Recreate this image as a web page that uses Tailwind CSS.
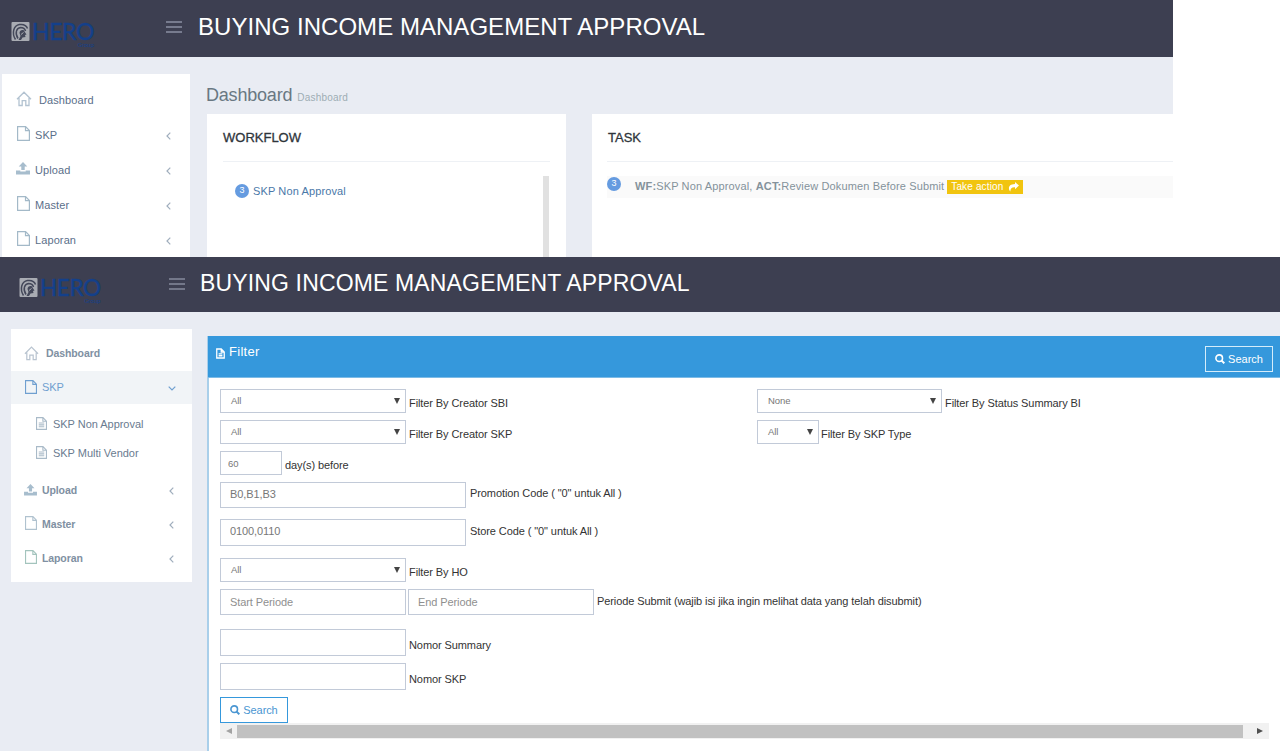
<!DOCTYPE html>
<html lang="en">
<head>
    <meta charset="UTF-8">
    <meta name="viewport" content="width=device-width, initial-scale=1.0">
    <title>Buying Income Management Approval</title>
    <script src="https://cdn.jsdelivr.net/npm/@tailwindcss/browser@4"></script>
</head>
<body class="bg-white w-[1280px] h-[751px] overflow-hidden font-['Liberation_Sans',Arial,sans-serif] text-[11px] leading-4">

    <!-- Icons -->
    <svg class="hidden">
        <symbol id="home" viewBox="0 0 16 16" fill="none" stroke="currentColor" stroke-width="1.300">
            <path d="M1 8.300 8 1.200l7 7.100M3 7v7.500h3.200V9.700h3.600v4.800H13V7" />
        </symbol>
        <symbol id="file" viewBox="0 0 13 15" fill="none" stroke="currentColor" stroke-width="1.200">
            <path d="M.6.6h8l3.800 3.900v9.900H.6zM8.500.6v4h4" />
        </symbol>
        <symbol id="doc" viewBox="0 0 12 14" fill="none" stroke="currentColor" stroke-width="1.200">
            <path d="M.6.6h7l3.800 3.900v8.900H.6zM7.500.6v4h4M3 6.500h6M3 8.500h6M3 10.500h6" />
        </symbol>
        <symbol id="upload" viewBox="0 0 14 13" fill="currentColor">
            <path d="M7 0l4.300 4.500H8.700V8H5.300V4.500H2.700zM0 8.500h4.300V9.500h5.400V8.500H14V12.500H0z" />
        </symbol>
        <symbol id="left" viewBox="0 0 5 8" fill="none" stroke="currentColor" stroke-width="1.200">
            <path d="M4.300.7 1 4l3.300 3.300" />
        </symbol>
        <symbol id="down" viewBox="0 0 8 5" fill="none" stroke="currentColor" stroke-width="1.200">
            <path d="M.7.7 4 4 7.300.7" />
        </symbol>
        <symbol id="search" viewBox="0 0 10 10" fill="none" stroke="currentColor">
            <circle cx="4.200" cy="4.200" r="3.300" stroke-width="1.600" />
            <path d="M6.600 6.600 9.300 9.300" stroke-width="2" />
        </symbol>
        <symbol id="share" viewBox="0 0 11 10" fill="currentColor">
            <path d="M7 0l4 3.600L7 7.200V5.200C4 5 2.500 6 2.300 9.500 0 7 0 2.200 7 2z" />
        </symbol>
        <symbol id="caret" viewBox="0 0 6 6" fill="currentColor">
            <path d="M0 0h6L3 6z" />
        </symbol>
        <symbol id="menu" viewBox="0 0 16 12" fill="none" stroke="currentColor" stroke-width="1.400">
            <path d="M0 1h16M0 6h16M0 11h16" />
        </symbol>
        <symbol id="emblem" viewBox="0 0 18 19" fill="none">
            <rect width="18" height="19" rx="1" fill="#a9acb3" />
            <path d="M4 17.500C0 11 2 3.500 8 2.500c4-.5 7 1 8 4M6.500 16.500C3 11 5 6 9 5.500c3 0 4.500 1.500 5 3.500" stroke="#44485a" stroke-width="1.500" />
            <path d="M8 11c0-2.500 2-3.500 4-3l3 4.500-1.500.5.500 2-3 .5-1.500 2.500H7l2-4z" fill="#44485a" />
            <path d="M9.500 12.500l2.500-2" stroke="#a9acb3" />
        </symbol>
    </svg>

    <!-- Dashboard page -->
    <section class="w-[1173px] h-[257px] overflow-hidden bg-[#e9ecf3]">
        <header class="h-[57px] bg-[#3d3f51] flex items-start">
            <div class="w-[166px] pl-[11px] pt-[22px] flex shrink-0">
                <svg class="w-[19px] h-[19px]"><use href="#emblem" /></svg>
                <div class="flex flex-col text-[#14408a] font-['Lato',sans-serif] pl-[2px]">
                    <span class="text-[23px] leading-[19px] tracking-[-0.4px] font-medium [-webkit-text-stroke:0.3px]">HERO</span>
                    <span class="self-end text-[6px] leading-[8px]">Group</span>
                </div>
            </div>
            <svg class="w-4 h-3 mt-[21px] text-[#8b90a2] shrink-0"><use href="#menu" /></svg>
            <h1 class="ml-4 mt-[11px] text-[24px] leading-[32px] tracking-[0.040px] text-white whitespace-nowrap">BUYING INCOME MANAGEMENT APPROVAL</h1>
        </header>

        <div class="flex">
            <nav class="ml-[2px] mt-[17px] w-[188px] h-[183px] bg-white pt-2 shrink-0 tracking-[0.1px] text-[#5b6f8a]">
                <a class="flex items-center h-[35px] pl-[14px] gap-[7px]"><svg class="size-4 mb-[2px] text-[#b3c3d1]"><use href="#home" /></svg>Dashboard</a>
                <a class="flex items-center h-[35px] pl-[15px] pr-[19px]"><svg class="w-[13px] h-[15px] mr-[5px] mb-[2px] text-[#a3b9c8]"><use href="#file" /></svg>SKP<svg class="w-[5px] h-2 ml-auto mt-[3px] text-[#a0aebd]"><use href="#left" /></svg></a>
                <a class="flex items-center h-[35px] pl-[14px] pr-[19px]"><svg class="w-[14px] h-[13px] mr-[5px] mb-[2px] text-[#a7bdcd]"><use href="#upload" /></svg>Upload<svg class="w-[5px] h-2 ml-auto mt-[3px] text-[#a0aebd]"><use href="#left" /></svg></a>
                <a class="flex items-center h-[35px] pl-[15px] pr-[19px]"><svg class="w-[13px] h-[15px] mr-[5px] mb-[2px] text-[#a3b9c8]"><use href="#file" /></svg>Master<svg class="w-[5px] h-2 ml-auto mt-[3px] text-[#a0aebd]"><use href="#left" /></svg></a>
                <a class="flex items-center h-[35px] pl-[15px] pr-[19px]"><svg class="w-[13px] h-[15px] mr-[5px] mb-[2px] text-[#a3b9c8]"><use href="#file" /></svg>Laporan<svg class="w-[5px] h-2 ml-auto mt-[3px] text-[#a0aebd]"><use href="#left" /></svg></a>
            </nav>

            <main class="ml-[17px] flex-1 min-w-0">
                <div class="h-[57px] pt-[26px] flex items-baseline gap-[5px] -ml-px">
                    <h2 class="text-[18px] leading-6 tracking-[-0.2px] text-[#697882]">Dashboard</h2>
                    <small class="text-[10px] tracking-[0.2px] text-[#9eacb4]">Dashboard</small>
                </div>
                <div class="flex gap-[26px]">
                    <div class="w-[359px] h-[143px] bg-white px-4 shrink-0">
                        <h3 class="h-[48px] pt-4 text-[13px] leading-4 text-[#2f353b] border-b border-[#eef1f5] [-webkit-text-stroke:0.3px]">WORKFLOW</h3>
                        <div class="flex mt-[14px]">
                            <a class="flex items-center h-[30px] pl-3 tracking-[0.12px] text-[#4a78a8] gap-1"><span class="size-[14px] rounded-full bg-[#659be0] text-white text-[9px] leading-[13px] text-center">3</span>SKP Non Approval</a>
                            <div class="w-[6px] h-[90px] bg-[#e1e1e1] ml-auto mr-px"></div>
                        </div>
                    </div>
                    <div class="flex-1 h-[143px] bg-white pl-[15px]">
                        <h3 class="h-[48px] pl-px pt-4 text-[13px] leading-4 text-[#2f353b] border-b border-[#eef1f5] [-webkit-text-stroke:0.3px]">TASK</h3>
                        <div class="mt-[14px] h-[22px] bg-[#fafafa] flex items-center text-[#84929b] whitespace-nowrap">
                            <span class="size-[14px] rounded-full bg-[#659be0] text-white text-[9px] leading-[13px] text-center mb-[6px] mr-[14px]">3</span>
                            <span class="mb-[2px] tracking-[0.14px]"><b>WF:</b>SKP Non Approval, <b>ACT:</b>Review Dokumen Before Submit</span>
                            <a class="ml-[3px] w-[76px] h-[14px] bg-[#f1c40f] text-white text-[10px] tracking-[0.15px] flex items-center pl-1 gap-1">Take action <svg class="w-[11px] h-[10px]"><use href="#share" /></svg></a>
                        </div>
                    </div>
                </div>
            </main>
        </div>
    </section>

    <!-- Filter page -->
    <section class="h-[494px] overflow-hidden bg-[#e9ecf3]">
        <header class="h-[55px] bg-[#3d3f51] flex items-start">
            <div class="w-[169px] pl-[19px] pt-[21px] flex shrink-0">
                <svg class="w-[19px] h-[19px]"><use href="#emblem" /></svg>
                <div class="flex flex-col text-[#14408a] font-['Lato',sans-serif] pl-[2px]">
                    <span class="text-[22.500px] leading-[19px] tracking-[-0.4px] font-medium [-webkit-text-stroke:0.3px]">HERO</span>
                    <span class="self-end text-[6px] leading-[8px]">Group</span>
                </div>
            </div>
            <svg class="w-4 h-3 mt-[21px] text-[#858a9c] shrink-0"><use href="#menu" /></svg>
            <h1 class="ml-[15px] mt-[10px] text-[23px] leading-[32px] tracking-[0.150px] text-white whitespace-nowrap">BUYING INCOME MANAGEMENT APPROVAL</h1>
        </header>

        <div class="flex">
            <nav class="ml-[11px] mt-[17px] w-[181px] h-[253px] bg-white pt-2 shrink-0 text-[10.500px] tracking-[-0.1px] font-bold text-[#8090a2]">
                <a class="flex items-center h-[34px] pl-[13px] pb-[2px] gap-[7px]"><svg class="size-[15px] text-[#b9c4d0]"><use href="#home" /></svg>Dashboard</a>
                <a class="flex items-center h-[33px] pl-[14px] pr-[16px] pb-px bg-[#f1f4f7] text-[#6f9fd0] font-normal text-[11px]"><svg class="w-3 h-[14px] mr-[5px]"><use href="#file" /></svg>SKP<svg class="w-2 h-[5px] ml-auto mt-[3px]"><use href="#down" /></svg></a>
                <div class="pt-[5px] pb-[6px] font-normal text-[11px] tracking-[-0.03px] text-[#6a7b90]">
                    <a class="flex items-center h-[29px] pl-[25px] gap-[6px]"><svg class="w-[11px] h-[13px] text-[#a9bac8]"><use href="#doc" /></svg>SKP Non Approval</a>
                    <a class="flex items-center h-[29px] pl-[25px] gap-[6px]"><svg class="w-[11px] h-[13px] text-[#a9bac8]"><use href="#doc" /></svg>SKP Multi Vendor</a>
                </div>
                <a class="flex items-center h-[34px] pl-[13px] pr-[18px]"><svg class="w-[13px] h-3 mr-[5px] mb-px text-[#a7bdcd]"><use href="#upload" /></svg>Upload<svg class="w-[5px] h-2 ml-auto mt-[2px] text-[#a0aebd]"><use href="#left" /></svg></a>
                <a class="flex items-center h-[34px] pl-[14px] pr-[18px]"><svg class="w-3 h-[14px] mr-[5px] mb-[2px] text-[#b0c2cf]"><use href="#file" /></svg>Master<svg class="w-[5px] h-2 ml-auto mt-[2px] text-[#a0aebd]"><use href="#left" /></svg></a>
                <a class="flex items-center h-[33px] pl-[14px] pr-[18px]"><svg class="w-3 h-[14px] mr-[5px] mb-[2px] text-[#a3c4bd]"><use href="#file" /></svg>Laporan<svg class="w-[5px] h-2 ml-auto mt-[2px] text-[#a0aebd]"><use href="#left" /></svg></a>
            </nav>

            <main class="ml-[15px] mt-6 flex-1 h-[415px] bg-white border-l-2 border-[#a9cfea] text-[#333]">
                <div class="-ml-px h-[42px] bg-[#3598dc] text-white flex items-start border-b border-[#7dbbe6]">
                    <svg class="w-[9px] h-[11px] ml-2 mt-[12px] mr-1" viewBox="0 0 12 14" fill="none" stroke="currentColor" stroke-width="1.700"><path d="M1 1h6l4 4v8H1zM7 1v4h4M3.500 7.500h5M3.500 10h5" /></svg>
                    <h3 class="mt-2 text-[13px] leading-4 tracking-[0.3px]">Filter</h3>
                    <button class="ml-auto mr-[7px] mt-[10px] w-[68px] h-[26px] border border-[#d5ecfa] flex items-center justify-center gap-[3px] pb-px"><svg class="size-[10px]"><use href="#search" /></svg>Search</button>
                </div>

                <form class="pl-[11px] pr-[11px] pt-[11px] tracking-[-0.09px]">
                    <div class="flex items-start h-[31px]">
                        <div class="w-[537px] flex">
                            <div class="w-[186px] h-[24px] border border-[#c2cad8] flex items-center pl-[10px] pr-[5px] text-[9.500px] text-[#777]">All<svg class="size-[6px] ml-auto text-[#444]"><use href="#caret" /></svg></div>
                            <label class="ml-[3px] pt-[6px]">Filter By Creator SBI</label>
                        </div>
                        <div class="w-[185px] h-[24px] border border-[#c2cad8] flex items-center pl-[10px] pr-[5px] text-[9.500px] text-[#777]">None<svg class="size-[6px] ml-auto text-[#444]"><use href="#caret" /></svg></div>
                        <label class="ml-[3px] pt-[6px]">Filter By Status Summary BI</label>
                    </div>
                    <div class="flex items-start h-[31px]">
                        <div class="w-[537px] flex">
                            <div class="w-[186px] h-[24px] border border-[#c2cad8] flex items-center pl-[10px] pr-[5px] text-[9.500px] text-[#777]">All<svg class="size-[6px] ml-auto text-[#444]"><use href="#caret" /></svg></div>
                            <label class="ml-[3px] pt-[6px]">Filter By Creator SKP</label>
                        </div>
                        <div class="w-[62px] h-[24px] border border-[#c2cad8] flex items-center pl-[10px] pr-[5px] text-[9.500px] text-[#777]">All<svg class="size-[6px] ml-auto text-[#444]"><use href="#caret" /></svg></div>
                        <label class="ml-[2px] pt-[6px]">Filter By SKP Type</label>
                    </div>
                    <div class="flex items-start h-[31px]">
                        <input type="text" value="60" class="w-[62px] h-[24px] border border-[#c2cad8] pl-[7px] text-[9.500px] text-[#777]">
                        <label class="ml-[3px] pt-[6px]">day(s) before</label>
                    </div>
                    <div class="flex items-start h-[37px]">
                        <input type="text" value="B0,B1,B3" class="w-[246px] h-[26px] border border-[#c2cad8] pl-[9px] pb-[2px] text-[#777]">
                        <label class="ml-[4px] pt-[3px]">Promotion Code ( "0" untuk All )</label>
                    </div>
                    <div class="flex items-start h-[39px]">
                        <input type="text" value="0100,0110" class="w-[246px] h-[27px] border border-[#c2cad8] pl-[9px] pb-[3px] text-[#777]">
                        <label class="ml-[4px] pt-[4px]">Store Code ( "0" untuk All )</label>
                    </div>
                    <div class="flex items-start h-[31px]">
                        <div class="w-[186px] h-[24px] border border-[#c2cad8] flex items-center pl-[10px] pr-[5px] text-[9.500px] text-[#777]">All<svg class="size-[6px] ml-auto text-[#444]"><use href="#caret" /></svg></div>
                        <label class="ml-[3px] pt-[6px]">Filter By HO</label>
                    </div>
                    <div class="flex items-start h-[40px]">
                        <input type="text" placeholder="Start Periode" class="w-[186px] h-[26px] border border-[#c2cad8] pl-[9px] placeholder:text-[#8f8f8f]">
                        <input type="text" placeholder="End Periode" class="ml-[2px] w-[186px] h-[26px] border border-[#c2cad8] pl-[9px] placeholder:text-[#8f8f8f]">
                        <label class="ml-[3px] pt-[4px]">Periode Submit (wajib isi jika ingin melihat data yang telah disubmit)</label>
                    </div>
                    <div class="flex items-start h-[34px]">
                        <input type="text" class="w-[186px] h-[27px] border border-[#c2cad8]">
                        <label class="ml-[3px] pt-[8px]">Nomor Summary</label>
                    </div>
                    <div class="flex items-start h-[34px]">
                        <input type="text" class="w-[186px] h-[27px] border border-[#c2cad8]">
                        <label class="ml-[3px] pt-[8px]">Nomor SKP</label>
                    </div>
                    <button class="w-[68px] h-[26px] border border-[#3598dc] text-[#4a96d2] flex items-center justify-center gap-[3px]"><svg class="size-[10px]"><use href="#search" /></svg>Search</button>
                    <!-- Horizontal scrollbar -->
                    <div class="h-4 bg-[#f1f1f1] flex items-center px-[6px]">
                        <svg class="size-[6px] rotate-90 text-[#a3a3a3]"><use href="#caret" /></svg>
                        <div class="ml-[5px] w-[1006px] h-[13px] bg-[#c1c1c1]"></div>
                        <svg class="size-[6px] ml-auto -rotate-90 text-[#505050]"><use href="#caret" /></svg>
                    </div>
                </form>
            </main>
        </div>
    </section>
</body>
</html>
